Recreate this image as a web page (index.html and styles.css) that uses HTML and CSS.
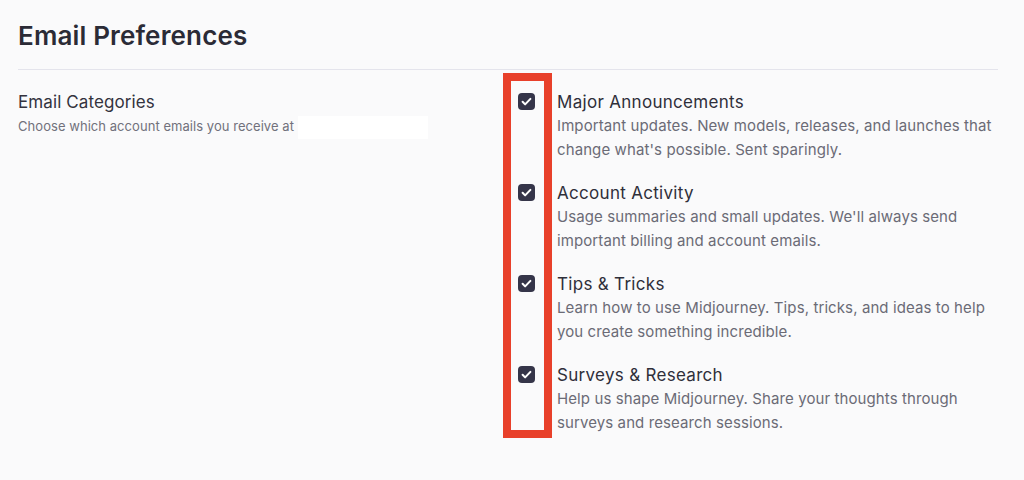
FILE: index.html
```html
<!DOCTYPE html>
<html lang="en">
<head>
<meta charset="utf-8">
<title>Email Preferences</title>
<link rel="stylesheet" href="styles.css">
</head>
<body>
<main class="page">
  <h1 class="page-title">Email Preferences</h1>
  <section class="settings">
    <div class="settings-label">
      <h2 class="label-title">Email Categories</h2>
      <p class="label-sub">Choose which account emails you receive at <span class="redacted"></span></p>
    </div>
    <div class="options">
      <div class="highlight"></div>
      <label class="option">
        <span class="checkbox"><svg viewBox="0 0 16 16" width="13" height="13"><path d="M3.2 8.4l3.1 3.1L12.8 4.8" fill="none" stroke="#fff" stroke-width="2.5" stroke-linecap="round" stroke-linejoin="round"/></svg></span>
        <span class="option-text">
          <span class="option-title">Major Announcements</span>
          <span class="option-desc">Important updates. New models, releases, and launches that change what's possible. Sent sparingly.</span>
        </span>
      </label>
      <label class="option">
        <span class="checkbox"><svg viewBox="0 0 16 16" width="13" height="13"><path d="M3.2 8.4l3.1 3.1L12.8 4.8" fill="none" stroke="#fff" stroke-width="2.5" stroke-linecap="round" stroke-linejoin="round"/></svg></span>
        <span class="option-text">
          <span class="option-title">Account Activity</span>
          <span class="option-desc">Usage summaries and small updates. We'll always send important billing and account emails.</span>
        </span>
      </label>
      <label class="option">
        <span class="checkbox"><svg viewBox="0 0 16 16" width="13" height="13"><path d="M3.2 8.4l3.1 3.1L12.8 4.8" fill="none" stroke="#fff" stroke-width="2.5" stroke-linecap="round" stroke-linejoin="round"/></svg></span>
        <span class="option-text">
          <span class="option-title">Tips &amp; Tricks</span>
          <span class="option-desc">Learn how to use Midjourney. Tips, tricks, and ideas to help you create something incredible.</span>
        </span>
      </label>
      <label class="option">
        <span class="checkbox"><svg viewBox="0 0 16 16" width="13" height="13"><path d="M3.2 8.4l3.1 3.1L12.8 4.8" fill="none" stroke="#fff" stroke-width="2.5" stroke-linecap="round" stroke-linejoin="round"/></svg></span>
        <span class="option-text">
          <span class="option-title">Surveys &amp; Research</span>
          <span class="option-desc">Help us shape Midjourney. Share your thoughts through surveys and research sessions.</span>
        </span>
      </label>
    </div>
  </section>
</main>
</body>
</html>
```

FILE: styles.css
```css
html, body {
  margin: 0;
  padding: 0;
  background: #fafafb;
}
body {
  font-family: Inter, "Noto Sans", "Liberation Sans", sans-serif;
  color: #2f2f3a;
  width: 1024px;
  height: 480px;
  overflow: hidden;
}
.page {
  padding: 0 26px 0 18px;
}
.page-title {
  margin: 0;
  padding-top: 20px;
  font-size: 26px;
  font-weight: 600;
  letter-spacing: 0.15px;
  color: #2b2b36;
  line-height: 32px;
  border-bottom: 1px solid #e4e4ec;
  box-sizing: border-box;
  height: 70px;
}
.settings {
  display: grid;
  grid-template-columns: 500px 1fr;
  padding-top: 20px;
}
.label-title {
  margin: 0;
  font-size: 17px;
  font-weight: 400;
  letter-spacing: 0.1px;
  line-height: 24px;
  color: #33333e;
}
.label-sub {
  margin: 2px 0 0;
  font-size: 13px;
  letter-spacing: 0.05px;
  line-height: 20px;
  color: #71717c;
}
.redacted {
  display: inline-block;
  width: 130px;
  height: 23px;
  background: #ffffff;
  vertical-align: middle;
}
.options {
  position: relative;
  display: flex;
  flex-direction: column;
  gap: 19px;
}
.highlight {
  position: absolute;
  left: -15px;
  top: -17px;
  width: 33px;
  height: 349px;
  border: 8px solid #e8402a;
}
.option {
  display: flex;
  align-items: flex-start;
  gap: 22px;
}
.checkbox {
  flex: none;
  width: 17px;
  height: 17px;
  margin-top: 3px;
  border-radius: 4px;
  background: #353549;
  display: flex;
  align-items: center;
  justify-content: center;
}
.option-text {
  display: flex;
  flex-direction: column;
}
.option-title {
  font-size: 17px;
  letter-spacing: 0.3px;
  line-height: 24px;
  color: #2f2f3a;
}
.option-desc {
  font-size: 15px;
  letter-spacing: 0.1px;
  line-height: 24px;
  color: #6b6b76;
  max-width: 440px;
}
```
